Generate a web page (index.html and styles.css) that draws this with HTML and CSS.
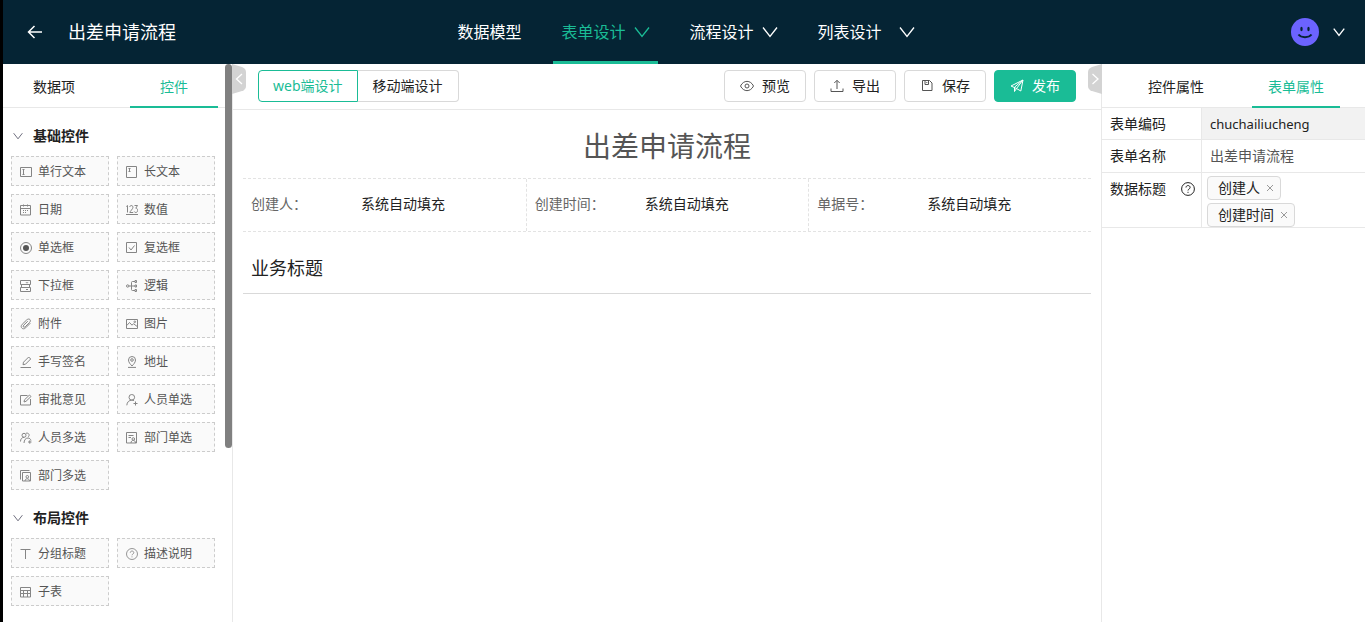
FILE: index.html
```html
<!DOCTYPE html>
<html lang="zh-CN">
<head>
<meta charset="utf-8">
<meta name="viewport" content="width=device-width, initial-scale=1">
<title>出差申请流程</title>
<link rel="stylesheet" href="styles.css">
</head>
<body>
<svg class="sprite" aria-hidden="true">
  <symbol id="down" viewBox="0 0 16 16"><path d="M1 3.5l7 9 7-9"/></symbol>
  <symbol id="input" viewBox="0 0 12 12"><path d="M.5 1.5h11v9H.5zM2.500 3.500h2M2.500 8.500h2M3.500 3.500v5"/></symbol>
  <symbol id="area" viewBox="0 0 12 12"><path d="M.5 .5h10v11H.5zM2.500 2.500h2M2.500 5.500h2M3.500 2.500v3"/></symbol>
  <symbol id="date" viewBox="0 0 12 12"><path d="M.5 1.500h10v9.500h-10zM.5 4.500h10M3.500 .5v2M7.500 .5v2M3 6.500h1M5 6.500h1M7 6.500h1M3 8.500h1M5 8.500h1"/></symbol>
  <symbol id="number" viewBox="0 0 12 12"><path d="M0 10.500h12M.3 2.500L1.500 1.500V8.500M3.800 3C3.800 1 7 1 7 3.200 7 5 3.800 7.500 3.800 8.500H7.200M8.500 1.500h3L9.800 4.200c2.600 0 2.400 4.300 0 4.300-.8 0-1.300-.4-1.500-1"/></symbol>
  <symbol id="radio" viewBox="0 0 12 12"><circle cx="6" cy="6" r="5.500"/><circle class="solid" cx="6" cy="6" r="3"/></symbol>
  <symbol id="check" viewBox="0 0 12 12"><path d="M.5 .5h10v10H.5zM3 5.500l2 2.500L8.500 3.500"/></symbol>
  <symbol id="select" viewBox="0 0 12 12"><path d="M.5 .5h10v4H.5zM.5 7.500h10v4H.5zM1.500 4.500v3M9.500 4.500v3M6 2.200l1 1 1-1M6 9l1 1 1-1"/></symbol>
  <symbol id="logic" viewBox="0 0 12 12"><circle cx="1.700" cy="6" r="1.200"/><path d="M3 6h6M5.500 6V2.500Q5.500 1.500 6.500 1.500H9M5.500 6v3.500q0 1 1 1H9M9 .5h1.500v2H9zM9 5h1.500v2H9zM9 9.500h1.500v2H9z"/></symbol>
  <symbol id="clip" viewBox="0 0 12 12"><path d="M10.300 5.200L5.700 9.800C2.800 12.600-.5 9 2.200 6.300L6.600 2c2.600-2.400 5.200.2 2.900 2.600L5.200 8.800C3.700 10 2.400 8.500 3.700 7.200L7.800 3.200"/></symbol>
  <symbol id="image" viewBox="0 0 12 12"><path d="M.5 1.500h11v9H.5zM.8 7.500L3.500 4.500 6 7.200l1.500-1.500 3.700 2.800"/><circle cx="8.800" cy="3.800" r=".8"/></symbol>
  <symbol id="sign" viewBox="0 0 12 12"><path d="M.5 11.500h10.500M3 8.700l.5-2.500 5.200-5.200 2 2L5.500 8.200z"/></symbol>
  <symbol id="pin" viewBox="0 0 12 12"><path d="M6 10C4.500 8.300 2.500 6.500 2.500 4a3.500 3.500 0 0 1 7 0C9.500 6.500 7.500 8.300 6 10zM2 11.400h8"/><circle cx="6" cy="4" r="1.300"/></symbol>
  <symbol id="edit" viewBox="0 0 12 12"><path d="M7.500 1.500H.5v9.500h10V5M4 8l.5-2.200L9.500 1l1.500 1.500L6 7.300z"/></symbol>
  <symbol id="user" viewBox="0 0 12 12"><circle cx="5.800" cy="3.300" r="2.800"/><path d="M.8 11.300c.2-3.200 2.200-5 5-5.200 1 0 1.700.3 2.300.7M7.500 9.500h4M9.500 7.500v4"/></symbol>
  <symbol id="users" viewBox="0 0 12 12"><circle cx="4" cy="3.300" r="2"/><path d="M.5 9.500c0-2.500 1.300-4 3.500-4.200M6 1.300c2.500-1 4.200 1.700 2.300 3.500M4 11c.2-3 1.500-5 4-5 1.500 0 2.500 1 3 2.500M8 10h3.500M9.800 8.300v3.400"/></symbol>
  <symbol id="dept" viewBox="0 0 12 12"><path d="M.5 .5h10v10.500H.5zM2.500 3.500h5M2.500 5.500h2.500M5 11c0-3.500 4.500-3.500 4.500 0"/><circle cx="7.300" cy="7" r="1.300"/></symbol>
  <symbol id="depts" viewBox="0 0 12 12"><path d="M2.500 2.500h8v8.500h-8zM.5 9.500V.5h9M5 11c0-3 4.500-3 4.500 0"/><circle cx="7.300" cy="6.800" r="1.300"/></symbol>
  <symbol id="text" viewBox="0 0 12 12"><path d="M.5 1.500h10M5.500 1.500v9.500"/></symbol>
  <symbol id="help" viewBox="0 0 14 14"><circle cx="7" cy="7" r="6.400"/><path d="M5 5.500c0-2.600 4.100-2.600 4.100 0C9.100 7 7 7 7 8.500M7 9.800v1.100"/></symbol>
  <symbol id="table" viewBox="0 0 12 12"><path d="M.5 1.500h10v9.500H.5zM.5 4.500h10M.5 7.500h10M3.500 4.500v6.500M7.500 4.500v6.500"/></symbol>
  <symbol id="eye" viewBox="0 0 14 14"><path d="M.5 7C3.500 .8 10.500 .8 13.500 7 10.500 13.200 3.500 13.200 .5 7z"/><circle cx="7" cy="7" r="2"/></symbol>
  <symbol id="export" viewBox="0 0 14 14"><path d="M1 9.500v3h12v-3M7 10V1.500M4.300 4L7 1.300 9.700 4"/></symbol>
  <symbol id="save" viewBox="0 0 14 14"><path d="M2.500 1.500h7l2.500 2.500v7.500H2.500zM5 1.500v4h3.500v-4M6.800 3v1"/></symbol>
  <symbol id="send" viewBox="0 0 14 14"><path d="M1 7l12-6-2.200 11L6.500 9.500zM13 1L4.500 8.200V12.500l2-3L13 1"/></symbol>
</svg>

<header class="header">
  <div class="header-left">
    <button class="plain" aria-label="返回"><svg class="i16 back" viewBox="0 0 16 16"><path d="M15 8H1.500M7.500 2L1.500 8l6 6"/></svg></button>
    <h1 class="app-title">出差申请流程</h1>
  </div>
  <nav class="nav">
    <a class="nav-item" href="#model">数据模型</a>
    <a class="nav-item active" href="#form">表单设计<svg class="i16"><use href="#down"/></svg></a>
    <a class="nav-item" href="#flow">流程设计<svg class="i16"><use href="#down"/></svg></a>
    <a class="nav-item wide" href="#list">列表设计<svg class="i16"><use href="#down"/></svg></a>
  </nav>
  <button class="plain account" aria-label="账户">
    <svg class="avatar" viewBox="0 0 28 28"><circle class="face" cx="14" cy="14" r="14"/><ellipse class="eye" cx="10.500" cy="11" rx="1.200" ry="2.300"/><ellipse class="eye" cx="17.500" cy="11" rx="1.200" ry="2.300"/><path class="smile" d="M7.500 16.500c2.500 3.500 10.500 3.500 13 0"/></svg>
    <svg class="i12"><use href="#down"/></svg>
  </button>
</header>

<div class="workspace">
  <aside class="sidebar">
    <div class="palette">
      <div class="tabs" role="tablist">
        <button class="tab" role="tab">数据项</button>
        <button class="tab active" role="tab" aria-selected="true">控件</button>
      </div>
      <h2 class="group"><svg class="i10"><use href="#down"/></svg>基础控件</h2>
      <div class="tiles">
        <button class="tile"><svg class="i12"><use href="#input"/></svg>单行文本</button>
        <button class="tile"><svg class="i12"><use href="#area"/></svg>长文本</button>
        <button class="tile"><svg class="i12"><use href="#date"/></svg>日期</button>
        <button class="tile"><svg class="i12"><use href="#number"/></svg>数值</button>
        <button class="tile"><svg class="i12"><use href="#radio"/></svg>单选框</button>
        <button class="tile"><svg class="i12"><use href="#check"/></svg>复选框</button>
        <button class="tile"><svg class="i12"><use href="#select"/></svg>下拉框</button>
        <button class="tile"><svg class="i12"><use href="#logic"/></svg>逻辑</button>
        <button class="tile"><svg class="i12"><use href="#clip"/></svg>附件</button>
        <button class="tile"><svg class="i12"><use href="#image"/></svg>图片</button>
        <button class="tile"><svg class="i12"><use href="#sign"/></svg>手写签名</button>
        <button class="tile"><svg class="i12"><use href="#pin"/></svg>地址</button>
        <button class="tile"><svg class="i12"><use href="#edit"/></svg>审批意见</button>
        <button class="tile"><svg class="i12"><use href="#user"/></svg>人员单选</button>
        <button class="tile"><svg class="i12"><use href="#users"/></svg>人员多选</button>
        <button class="tile"><svg class="i12"><use href="#dept"/></svg>部门单选</button>
        <button class="tile"><svg class="i12"><use href="#depts"/></svg>部门多选</button>
      </div>
      <h2 class="group"><svg class="i10"><use href="#down"/></svg>布局控件</h2>
      <div class="tiles">
        <button class="tile"><svg class="i12"><use href="#text"/></svg>分组标题</button>
        <button class="tile"><svg class="i12"><use href="#help"/></svg>描述说明</button>
        <button class="tile"><svg class="i12"><use href="#table"/></svg>子表</button>
      </div>
    </div>
    <div class="scroll-track"><div class="scroll-thumb"></div></div>
  </aside>

  <main class="main">
    <button class="handle handle-left" aria-label="收起左侧"><svg viewBox="0 0 14 30"><path class="tab-shape" d="M0 0L10 3Q14 4.500 14 8V22Q14 25.500 10 27L0 30z"/><path class="arrow" d="M10 10L4.500 15l5.500 5"/></svg></button>
    <button class="handle handle-right" aria-label="收起右侧"><svg viewBox="0 0 14 30"><path class="tab-shape" d="M14 0L4 3Q0 4.500 0 8V22Q0 25.500 4 27L14 30z"/><path class="arrow" d="M4.500 10L10 15l-5.500 5"/></svg></button>
    <div class="toolbar">
      <div class="segmented">
        <button class="segment active">web端设计</button>
        <button class="segment">移动端设计</button>
      </div>
      <div class="actions">
        <button class="btn"><svg class="i14"><use href="#eye"/></svg>预览</button>
        <button class="btn"><svg class="i14"><use href="#export"/></svg>导出</button>
        <button class="btn"><svg class="i14"><use href="#save"/></svg>保存</button>
        <button class="btn primary"><svg class="i14"><use href="#send"/></svg>发布</button>
      </div>
    </div>
    <section class="form">
      <h2 class="form-title">出差申请流程</h2>
      <dl class="meta">
        <div class="meta-cell"><dt>创建人：</dt><dd>系统自动填充</dd></div>
        <div class="meta-cell"><dt>创建时间：</dt><dd>系统自动填充</dd></div>
        <div class="meta-cell"><dt>单据号：</dt><dd>系统自动填充</dd></div>
      </dl>
      <h3 class="section-title">业务标题</h3>
    </section>
  </main>

  <aside class="props">
    <div class="tabs" role="tablist">
      <button class="tab" role="tab">控件属性</button>
      <button class="tab active" role="tab" aria-selected="true">表单属性</button>
    </div>
    <div class="prop">
      <label class="prop-label" for="code">表单编码</label>
      <input class="prop-input" id="code" value="chuchailiucheng" readonly>
    </div>
    <div class="prop">
      <label class="prop-label" for="name">表单名称</label>
      <input class="prop-input name" id="name" value="出差申请流程">
    </div>
    <div class="prop">
      <div class="prop-label">数据标题<svg class="i14"><use href="#help"/></svg></div>
      <div class="tags">
        <span class="tag">创建人<button class="plain" aria-label="移除创建人"><svg class="i8" viewBox="0 0 8 8"><path d="M1 1l6 6M7 1l-6 6"/></svg></button></span>
        <span class="tag">创建时间<button class="plain" aria-label="移除创建时间"><svg class="i8" viewBox="0 0 8 8"><path d="M1 1l6 6M7 1l-6 6"/></svg></button></span>
      </div>
    </div>
  </aside>
</div>
</body>
</html>
```
FILE: styles.css
```css
* { box-sizing: border-box; }

body {
  margin: 0;
  min-height: 100vh;
  display: flex;
  flex-direction: column;
  border-left: 3px solid #000;
  background: #fff;
  color: #222;
  font: 14px/20px "Noto Sans", "Noto Sans CJK SC", sans-serif;
}

h1, h2, h3, dl, dd { margin: 0; font-weight: 400; }
button, input { font: inherit; color: inherit; }
button { cursor: pointer; }

svg { fill: none; stroke: currentColor; flex: none; }
.sprite { position: absolute; width: 0; height: 0; }
.solid { fill: currentColor; stroke: none; }
.i8 { width: 8px; height: 8px; }
.i10 { width: 10px; height: 10px; }
.i12 { width: 12px; height: 12px; }
.i14 { width: 14px; height: 14px; }
.i16 { width: 16px; height: 16px; }
.plain { display: flex; align-items: center; padding: 0; border: 0; background: none; }

.header {
  display: grid;
  grid-template-columns: 1fr auto 1fr;
  align-items: center;
  height: 64px;
  padding: 0 20px 0 24px;
  background: #052434;
  color: #fff;
}
.header-left { display: flex; align-items: center; gap: 25px; }
.back { stroke-width: 1.5; }
.app-title { font-size: 18px; line-height: 28px; }
.nav { display: flex; gap: 24px; height: 64px; }
.nav-item {
  display: flex;
  align-items: center;
  gap: 8px;
  padding: 2px 8px 0;
  border-bottom: 3px solid transparent;
  color: #fff;
  font-size: 16px;
  text-decoration: none;
}
.nav-item svg { stroke-width: 1.3; }
.nav-item.active { color: #1abc96; border-color: #1abc96; }
.nav-item.wide { gap: 17px; }
.account { justify-self: end; gap: 14px; }
.account > .i12 { stroke-width: 1.8; }
.avatar { width: 28px; height: 28px; }
.face { fill: #6c63ff; stroke: none; }
.eye { fill: #052434; stroke: none; }
.smile { stroke: #052434; stroke-width: 2; }

.workspace {
  flex: 1;
  display: grid;
  grid-template-columns: 230px 1fr 264px;
}

.sidebar { display: flex; border-right: 1px solid #e8e8e8; }
.palette { flex: 1; }
.scroll-track { width: 7px; }
.scroll-thumb { height: 384px; border-radius: 4px; background: #808080; }

.tabs { display: flex; height: 44px; border-bottom: 1px solid #e8e8e8; }
.tab {
  height: 44px;
  padding: 4px 16px 0;
  border: 0;
  border-bottom: 2px solid transparent;
  background: none;
}
.tab.active { color: #1abc96; border-color: #1abc96; }
.palette .tabs { gap: 25px; }
.palette .tab { padding: 4px 30px 0; }
.props .tabs { gap: 32px; padding-left: 30px; }

.group {
  display: flex;
  align-items: center;
  gap: 10px;
  padding: 18px 0 10px 10px;
  font-size: 14px;
  font-weight: 700;
}
.group svg { stroke: #667; stroke-width: 1.5; }
.tiles { display: grid; grid-template-columns: 1fr 1fr; gap: 8px; padding: 0 10px 0 8px; }
.tile {
  display: flex;
  align-items: center;
  gap: 6px;
  height: 30px;
  padding: 2px 8px 0;
  border: 1px dashed #ccc;
  background: #fafafa;
  color: #555;
  font-size: 12px;
  white-space: nowrap;
}
.tile svg { stroke: #858585; }
.tile .solid, #radio .solid { fill: #555; }

.main { position: relative; min-width: 0; }
.handle {
  position: absolute;
  top: 0;
  width: 14px;
  height: 30px;
  padding: 0;
  border: 0;
  background: none;
}
.handle svg { display: block; width: 14px; height: 30px; }
.handle-left { left: -1px; }
.handle-right { right: -1px; }
.tab-shape { fill: #d3d3d3; stroke: none; }
.arrow { stroke: #fff; stroke-width: 1.3; }

.toolbar {
  display: flex;
  justify-content: space-between;
  align-items: flex-start;
  padding: 6px 25px 7px;
  border-bottom: 1px solid #e8e8e8;
}
.segmented { display: flex; }
.segment {
  height: 32px;
  padding: 0 14px;
  border: 1px solid #d9d9d9;
  background: #fff;
}
.segment:first-child { border-radius: 4px 0 0 4px; }
.segment:last-child { border-left: 0; border-radius: 0 4px 4px 0; padding: 0 15px; }
.segment.active { border-color: #1abc96; color: #1abc96; }
.actions { display: flex; gap: 8px; }
.btn {
  display: flex;
  align-items: center;
  gap: 8px;
  height: 32px;
  padding: 0 15px;
  border: 1px solid #d9d9d9;
  border-radius: 4px;
  background: #fff;
}
.btn svg { stroke: #555; }
.btn.primary { border-color: #1abc96; background: #1abc96; color: #fff; }
.btn.primary svg { stroke: #fff; }

.form { padding: 0 10px; }
.form-title {
  padding: 16px 0 12px;
  color: #555;
  font-size: 28px;
  line-height: 40px;
  text-align: center;
}
.meta {
  display: grid;
  grid-template-columns: 1fr 1fr 1fr;
  border-top: 1px dashed #e3e3e3;
  border-bottom: 1px dashed #e3e3e3;
}
.meta-cell { display: flex; padding: 15px 8px 17px; }
.meta-cell + .meta-cell { border-left: 1px dashed #e3e3e3; }
.meta-cell dt { width: 110px; color: #666; }
.section-title {
  padding: 22px 8px 11px;
  border-bottom: 1px solid #d9d9d9;
  font-size: 18px;
  line-height: 28px;
}

.props { border-left: 1px solid #e8e8e8; }
.prop {
  display: grid;
  grid-template-columns: 99px 1fr;
  border-bottom: 1px solid #e8e8e8;
}
.prop-label {
  display: flex;
  align-items: center;
  justify-content: space-between;
  min-height: 31px;
  padding: 0 6px 0 8px;
}
.prop:nth-last-child(-n+2) .prop-label { height: 32px; }
.prop-input {
  min-width: 0;
  padding: 0 8px;
  border: 0;
  border-left: 1px solid #e8e8e8;
  border-radius: 0;
}
.prop-input:read-only { background: #f2f2f2; font-size: 13px; }
.prop-input.name { color: #555; }
.tags {
  display: flex;
  flex-direction: column;
  align-items: flex-start;
  gap: 3px;
  padding: 3px 5px 0;
  border-left: 1px solid #e8e8e8;
}
.tag {
  display: flex;
  align-items: center;
  gap: 6px;
  height: 24px;
  padding: 0 6px 0 10px;
  border: 1px solid #d9d9d9;
  border-radius: 4px;
  background: #fafafa;
}
.tag svg { stroke: #999; }
```
